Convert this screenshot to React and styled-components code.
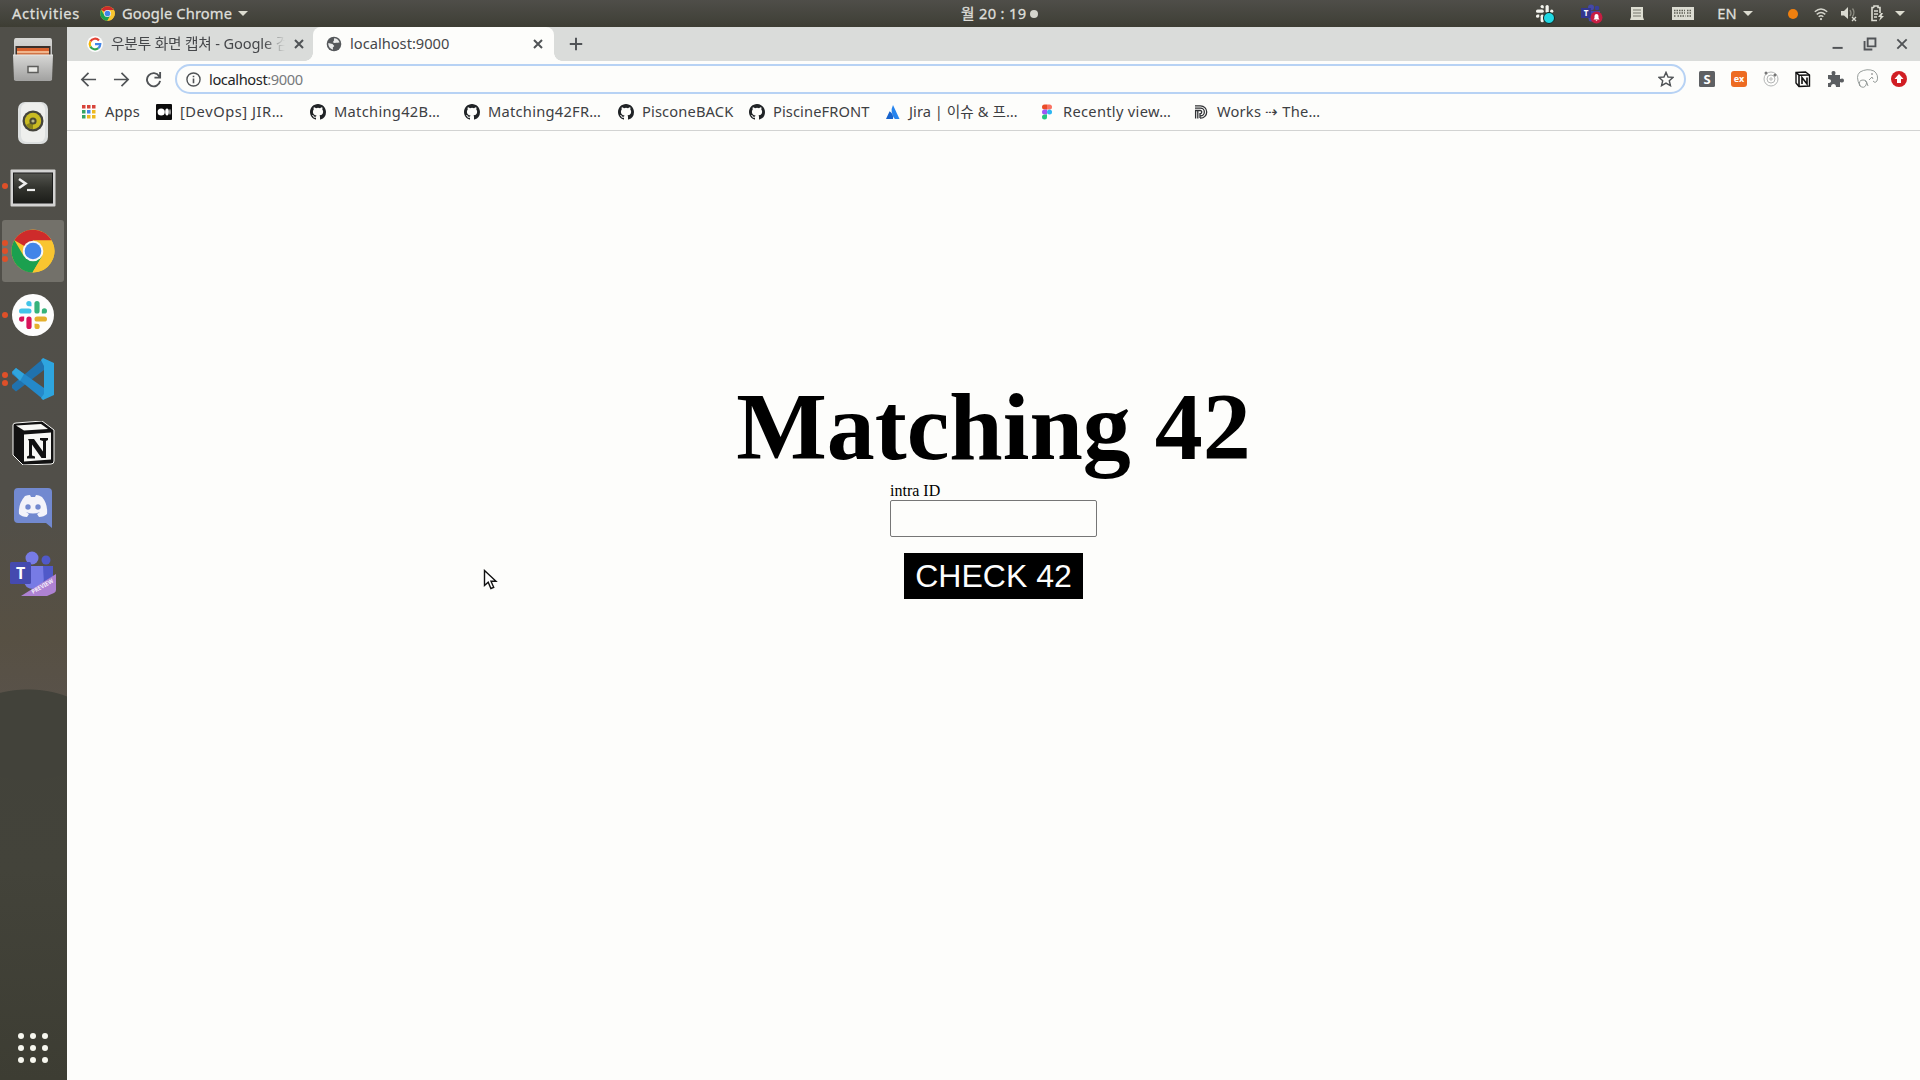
import React from "react";
import styled, { createGlobalStyle, css } from "styled-components";

const UI = `"Noto Sans", "Noto Sans CJK KR", sans-serif`;

const Global = createGlobalStyle`
  *, *::before, *::after { box-sizing: border-box; }
  html, body { margin: 0; height: 100%; overflow: hidden; }
  #root { height: 100%; }
`;

const Desktop = styled.div`
  display: flex;
  flex-direction: column;
  width: 1920px;
  height: 1080px;
  overflow: hidden;
  background: #45453c;
  font-family: ${UI};
`;

/* ---------- system bar ---------- */
const TopBar = styled.header`
  display: grid;
  grid-template-columns: 961px auto 1fr;
  height: 27px;
  flex: none;
  align-items: center;
  background: linear-gradient(#4f4e49, #42423a 75%, #3d3d33);
  color: #dfdfda;
  font-size: 14.67px;
  -webkit-text-stroke: 0.3px #dfdfda;
  line-height: 27px;
`;

const BarLeft = styled.div`
  display: flex;
  align-items: center;
  padding-left: 12px;
`;

const BarText = styled.span`
  letter-spacing: ${(p) => p.$ls || 0}px;
  width: ${(p) => (p.$w ? `${p.$w}px` : "auto")};
  margin-left: ${(p) => p.$left || 0}px;
  margin-right: ${(p) => p.$gap || 0}px;
  white-space: nowrap;
`;

const Caret = styled.i`
  width: 0;
  height: 0;
  border: 5px solid transparent;
  border-top: 5.5px solid #dcdcd0;
  border-bottom: 0;
`;

const Clock = styled.div`
  display: flex;
  align-items: center;
  gap: 3px;
  letter-spacing: 0.35px;
`;

const Dot = styled.i`
  width: ${(p) => p.$size}px;
  height: ${(p) => p.$size}px;
  border-radius: 50%;
  background: ${(p) => p.$color};
`;

const Tray = styled.div`
  display: flex;
  justify-content: flex-end;
  align-items: center;
  padding-right: 6px;
`;

const TrayItem = styled.div`
  display: flex;
  align-items: center;
  justify-content: center;
  gap: 6px;
  width: ${(p) => p.$w}px;
  height: 27px;
`;

/* ---------- dock ---------- */
const Body = styled.div`
  display: flex;
  flex: 1;
  min-height: 0;
`;

const Dock = styled.nav`
  display: flex;
  flex-direction: column;
  width: 67px;
  flex: none;
  padding-bottom: 10px;
  background:
    radial-gradient(ellipse 74px 46px at 28px 708px, #42423a 98%, transparent 100%) no-repeat,
    linear-gradient(#504f49 0, #514f49 45%, #575043 58%, #59524a 678px, #42423a 678px, #43433a 80%, #3d3d33 100%);
`;

const DockItem = styled.div`
  display: grid;
  grid-template-columns: 9px 46px;
  align-items: center;
  width: 62px;
  height: 62px;
  margin: 0 0 2.2px 2px;
  border-radius: 3px;
  background: ${(p) => (p.$active ? "#73716a" : "transparent")};
`;

const Markers = styled.div`
  display: flex;
  flex-direction: column;
  gap: 2px;
`;

const AppGrid = styled.div`
  display: grid;
  grid-template-columns: repeat(3, 6px);
  gap: 6px;
  margin: auto 0 7px 18px;
`;

/* ---------- browser ---------- */
const Browser = styled.section`
  display: flex;
  flex-direction: column;
  flex: 1;
  min-width: 0;
  background: #fdfdfb;
`;

const TabStrip = styled.div`
  display: flex;
  height: 34px;
  flex: none;
  background: #dadcda;
  color: #45474a;
  font-size: 14.67px;
`;

const Tab = styled.div`
  display: flex;
  align-items: center;
  gap: 8px;
  width: ${(p) => p.$w}px;
  height: 34px;
  padding: 0 ${(p) => p.$end}px 0 ${(p) => p.$pad}px;
  ${(p) =>
    p.$active &&
    css`
      position: relative;
      background: #fdfdfb;
      border-radius: 8px 8px 0 0;
      &::before, &::after {
        content: "";
        position: absolute;
        bottom: 0;
        width: 8px;
        height: 8px;
      }
      &::before {
        left: -8px;
        background: radial-gradient(circle at 0 0, transparent 7.5px, #fdfdfb 8px);
      }
      &::after {
        right: -8px;
        background: radial-gradient(circle at 100% 0, transparent 7.5px, #fdfdfb 8px);
      }
    `}
`;

const TabTitle = styled.span`
  flex: 1;
  overflow: hidden;
  white-space: nowrap;
  line-height: 30px;
  padding-bottom: 2px;
  letter-spacing: ${(p) => p.$ls}px;
  ${(p) => p.$fade && css`mask-image: linear-gradient(90deg, #000 88%, transparent);`}
`;

const NewTab = styled.div`
  display: flex;
  align-items: center;
  margin-left: 14px;
`;

const WindowButtons = styled.div`
  display: flex;
  align-items: center;
  gap: 18px;
  margin-left: auto;
  padding-right: 11px;
`;

const Toolbar = styled.div`
  display: flex;
  align-items: center;
  height: 36px;
  flex: none;
  padding: 0 0 0 13px;
`;

const NavButtons = styled.div`
  display: flex;
  gap: 15.5px;
  width: 95px;
  flex: none;
`;

const Omnibox = styled.div`
  display: flex;
  align-items: center;
  width: 1511px;
  flex: none;
  height: 30px;
  padding: 0 10px 0 9px;
  border: 2px solid #b7d2f4;
  border-radius: 15px;
  color: #777a7c;
  font-size: 14.67px;
`;

const Address = styled.span`
  flex: 1;
  margin-left: 8px;
  line-height: 24px;
  padding-bottom: 1px;
  letter-spacing: -0.4px;
  b { font-weight: 400; color: #222426; }
`;

const Extensions = styled.div`
  display: flex;
  flex: none;
  gap: 8px;
  margin-left: 9px;
`;

const Bookmarks = styled.div`
  display: flex;
  align-items: center;
  height: 34px;
  flex: none;
  padding: 0 0 3px 14px;
  border-bottom: 1px solid #d2d3d2;
  color: #3d4043;
  font-size: 14.67px;
`;

const Bookmark = styled.div`
  display: flex;
  align-items: center;
  gap: 8px;
  width: ${(p) => p.$w}px;
  flex: none;
  white-space: nowrap;
  letter-spacing: ${(p) => p.$ls}px;
  line-height: 28px;
  svg { flex: none; }
`;

const BookmarkLabel = styled.span`
  padding-bottom: 2px;
`;

const Page = styled.main`
  display: flex;
  flex-direction: column;
  align-items: center;
  flex: 1;
  padding-top: 241px;
  color: #000;
  font-family: "Liberation Serif", serif;
`;

const Title = styled.h1`
  margin: 0;
  font-size: 96px;
  line-height: 110px;
  font-weight: 700;
`;

const Field = styled.label`
  display: flex;
  flex-direction: column;
  width: 207px;
  font-size: 16px;
  line-height: 18px;
`;

const Input = styled.input`
  width: 207px;
  height: 37px;
  border: 1px solid #767676;
  border-radius: 2px;
  background: #fdfdfb;
  font-size: 16px;
`;

const CheckButton = styled.button`
  width: 179px;
  height: 46px;
  margin-top: 16px;
  padding: 0;
  border: 0;
  background: #000;
  color: #fdfdfd;
  font: 32px/46px "Liberation Sans", sans-serif;
`;

const Pointer = styled.svg`
  position: absolute;
  left: 483px;
  top: 569px;
`;

/* ---------- drawings ---------- */
const Chrome = ({ size }) => (
  <svg width={size} height={size} viewBox="0 0 44 44">
    <circle cx="22" cy="22" r="21.5" fill="#f9c530" />
    <path d="M22 22L3.4 11.2A21.5 21.5 0 0 1 40.6 11.5H22z" fill="#ce2b2b" />
    <path d="M3.4 11.2A21.5 21.5 0 0 0 21.5 43.5L31 27.5 22 22 13 27.5z" fill="#1ba04f" />
    <path d="M22 11.5H40.6A21.5 21.5 0 0 1 21.5 43.5L31 27.5z" fill="#f9c530" />
    <circle cx="22" cy="22" r="10.3" fill="#f7f7f7" />
    <circle cx="22" cy="22" r="8.3" fill="#4285e8" />
  </svg>
);

const SlackMark = ({ mono }) => {
  const c = mono ? Array(4).fill("#f4f4ee") : ["#41c3e8", "#36b37a", "#e5b02d", "#d8135a"];
  return [0, 1, 2, 3].map((i) => (
    <g key={i} fill={c[i]} transform={`rotate(${i * 90} 14 14)`}>
      <rect x="0" y="7.4" width="12.5" height="5.2" rx="2.6" />
      <path d="M12.5 5.2h-2.6a2.6 2.6 0 1 1 2.6-2.6z" />
    </g>
  ));
};

const Files = () => (
  <svg width="42" height="46" viewBox="0 0 42 46">
    <defs><linearGradient id="cab" x2="0" y2="1"><stop stopColor="#d7d7d5" /><stop offset="1" stopColor="#a3a3a2" /></linearGradient></defs>
    <path d="M4 2h34q2 0 2 3v38q0 2-2 2H4q-2 0-2-2V5q0-3 2-3z" fill="url(#cab)" />
    <path d="M3.500 10h35v10h-35z" fill="#3b302b" />
    <path d="M5 12h32v8H5z" fill="#d9622e" /><path d="M5 15h32v2H5z" fill="#f0b58c" /><path d="M5 17h32v3H5z" fill="#cf7447" />
    <path d="M1 19h40l-1 25H2z" fill="url(#cab)" /><path d="M1 19h40" stroke="#e8e8e5" />
    <rect x="16" y="30.500" width="10" height="6" fill="#e9e9e6" stroke="#5d5d5b" strokeWidth="1.500" />
  </svg>
);
const Speaker = () => (
  <svg width="42" height="46" viewBox="0 0 42 46">
    <rect x="6" y="2" width="30" height="42" rx="7" fill="#dcdfdf" /><rect x="9" y="3" width="24" height="39" rx="6" fill="#eeefed" />
    <circle cx="21" cy="21" r="10.500" fill="#44443c" /><circle cx="21" cy="21" r="8.200" fill="#c9bb22" /><path d="M21 21l-7 4a8 8 0 0 0 7 4z" fill="#8b841a" />
    <circle cx="21" cy="21" r="3.600" fill="#4b4a31" /><circle cx="21" cy="21" r="1.600" fill="#b9b78a" />
  </svg>
);
const Terminal = () => (
  <svg width="46" height="38" viewBox="0 0 46 38">
    <defs><linearGradient id="scr" x2="0" y2="1"><stop stopColor="#555650" /><stop offset=".5" stopColor="#32332e" /><stop offset="1" stopColor="#1c1d19" /></linearGradient></defs>
    <rect x=".5" y=".5" width="45" height="37" rx="1" fill="#d3d3d2" /><rect x="3.500" y="4" width="39" height="30" fill="url(#scr)" stroke="#1c1d1c" />
    <path d="M9 10l6.500 4.500L9 19" fill="none" stroke="#eee" strokeWidth="2.600" /><path d="M17 21h8" stroke="#eee" strokeWidth="2.200" />
  </svg>
);
const Slack = () => (
  <svg width="42" height="42" viewBox="0 0 42 42"><circle cx="21" cy="21" r="21" fill="#fdfdfd" /><g transform="translate(7 7)"><SlackMark /></g></svg>
);
const Code = () => (
  <svg width="42" height="42" viewBox="0 0 42 42">
    <path d="M0 30l4 3.500L32 12V0L0 27z" fill="#2072ae" /><path d="M0 14l4-4 28 20v12L0 16z" fill="#2489ca" />
    <path d="M0 14l4-4 8 6-4 7z" fill="#31a5dc" /><path d="M31 0l11 5v32l-11 5-2-2 3-4V8l-3-6z" fill="#2ea5df" />
  </svg>
);
const Notion = ({ size = 44 }) => (
  <svg width={size} height={size} viewBox="0 0 44 44">
    <path d="M2 4Q2 2 5 2L31 0l12 9v31q0 3-3 3L12 44 2 34z" fill="#111" stroke="#f8f8f5" strokeWidth="1" />
    <path d="M5 4.500L30 3l7 5L13 9.500z" fill="#f8f8f5" />
    <path d="M13 13.500L40 11.500v27l-27 2z" fill="#f8f8f5" />
    <path d="M17 18h6l9 12.500V20l-3-1v-2h8v2l-2 1v17h-4.500L21 23.500v11l3 1v2h-8v-2l2-1V20z" fill="#111" />
  </svg>
);
const Discord = () => (
  <svg width="42" height="42" viewBox="0 0 42 42">
    <path d="M6 1h30q4 0 4 4v36l-6-5H6q-4 0-4-4V5q0-4 4-4z" fill="#7289d0" />
    <path d="M13 9q3-1 5-1l1 2h4l1-2q3 0 6 2 6 7 5 17-3 3-8 3l-2-3 3-2q-7 3-14 0l3 2-2 3q-5 0-8-3-1-10 6-18z" fill="#f3f3fa" />
    <circle cx="16" cy="20" r="2.700" fill="#7289d0" /><circle cx="26" cy="20" r="2.700" fill="#7289d0" />
  </svg>
);
const BannerText = styled.text`
  font: 700 6px ${UI};
  fill: #f4f1fd;
`;
const TileText = styled.text`
  font: 700 ${(p) => p.$size}px ${UI};
  fill: ${(p) => p.$fill || "#fff"};
  text-anchor: middle;
  -webkit-text-stroke: 0;
`;
const TeamsSvg = styled.svg`
  overflow: visible;
`;
const Teams = () => (
  <TeamsSvg width="46" height="46" viewBox="0 0 46 46">
    <circle cx="22" cy="7" r="6.500" fill="#777be5" /><circle cx="36" cy="9" r="4.500" fill="#5059c9" />
    <path d="M14 15h20v14q0 9-10 9t-10-9z" fill="#777be5" /><path d="M33 15h10v15q-3 5-9 3z" fill="#5059c9" />
    <rect y="11" width="21" height="22" rx="1.500" fill="#454aaf" /><TileText $size={16} x="10.500" y="28">T</TileText>
    <path d="M11 45L46 23v16q0 2-2 3l-7 3z" fill="#ae82d3" /><BannerText transform="translate(23 43) rotate(-30)" textLength="24" lengthAdjust="spacingAndGlyphs">PREVIEW</BannerText>
  </TeamsSvg>
);

const CenterIcon = styled.div`
  display: flex;
  justify-content: center;
  width: 43px;
  padding-top: ${(p) => p.$down || 0}px;
  svg { flex: none; }
`;

const AppIcon = ({ active, children, dots = 0, down }) => (
  <DockItem $active={active}>
    <Markers>{Array.from({ length: dots }, (_, i) => <Dot key={i} $size={6} $color="#de5029" />)}</Markers>
    <CenterIcon $down={down}>{children}</CenterIcon>
  </DockItem>
);

const dock = [
  [0, <Files />, 1], [0, <Speaker />, 1], [1, <Terminal />, 4], [3, <Chrome size={44} />, 0], [1, <Slack />, 0],
  [2, <Code />, 0], [0, <Notion />, 0], [0, <Discord />, 2], [0, <Teams />, 4],
];

const Line = ({ d, size = 18, w = 1.8, color = "#505356" }) => (
  <svg width={size} height={size} viewBox="0 0 18 18" fill="none" stroke={color} strokeWidth={w}><path d={d} /></svg>
);
const GoogleG = () => (
  <svg width="16" height="16" viewBox="0 0 16 16"><circle cx="8" cy="8" r="8" fill="#fdfdfd" /><g fill="none" strokeWidth="2.200">
    <path d="M12 4.500A5.300 5.300 0 0 0 3.400 5.400" stroke="#e34133" /><path d="M3.400 5.400a5.300 5.300 0 0 0 0 5.200" stroke="#f4b400" />
    <path d="M3.400 10.600a5.300 5.300 0 0 0 8 1.500" stroke="#31a352" /><path d="M11.400 12.100A5.300 5.300 0 0 0 13.300 8.100H8" stroke="#4285e8" /></g></svg>
);
const Globe = () => (
  <svg width="16" height="16" viewBox="0 0 16 16"><circle cx="8" cy="8" r="7.300" fill="#55585b" />
    <path d="M8 2.200c3 0 5 2 5.600 4.300-1.500-.5-2 .8-3.300.2L8.500 7 6.700 6.200l1.200-1.500z" fill="#e9eaea" /><path d="M2.300 7l4.200 1 1.800 2-1.500 1.500.3 2.200A5.900 5.900 0 0 1 2.300 7z" fill="#e9eaea" /></svg>
);
const AppsIcon = () => (
  <svg width="16" height="16" viewBox="0 0 16 16">{["#d84339", "#d84339", "#d84339", "#36a564", "#4285e8", "#edb91f", "#36a564", "#edb91f", "#edb91f"].map((c, i) => <rect key={i} x={1 + (i % 3) * 5} y={1 + Math.floor(i / 3) * 5} width="3.500" height="3.500" fill={c} />)}</svg>
);
const Medium = () => (
  <svg width="16" height="16" viewBox="0 0 16 16"><rect width="16" height="16" rx="1" fill="#0b0b0b" /><circle cx="5.200" cy="8" r="3.600" fill="#fff" /><ellipse cx="11" cy="8" rx="1.800" ry="3.400" fill="#fff" /><ellipse cx="14" cy="8" rx=".6" ry="3" fill="#fff" /></svg>
);
const GitHub = () => (
  <svg width="16" height="16" viewBox="0 0 16 16"><path fill="#202326" d="M8 0C3.580 0 0 3.580 0 8c0 3.540 2.290 6.530 5.470 7.590.4.070.55-.17.55-.38 0-.19-.01-.82-.01-1.490-2.010.37-2.530-.49-2.690-.94-.09-.23-.48-.94-.82-1.130-.28-.15-.68-.52-.01-.53.63-.01 1.080.58 1.230.82.72 1.210 1.870.87 2.330.66.07-.52.28-.87.51-1.070-1.780-.2-3.640-.89-3.640-3.950 0-.87.31-1.590.82-2.150-.08-.2-.36-1.020.08-2.120 0 0 .67-.21 2.200.82a7.600 7.600 0 0 1 4 0c1.530-1.040 2.200-.82 2.200-.82.44 1.100.16 1.920.08 2.120.51.56.82 1.270.82 2.150 0 3.070-1.870 3.750-3.650 3.950.29.25.54.73.54 1.480 0 1.070-.01 1.930-.01 2.200 0 .21.15.46.55.38A8 8 0 0 0 16 8c0-4.420-3.580-8-8-8z" /></svg>
);
const Jira = () => (
  <svg width="16" height="16" viewBox="0 0 16 16"><path d="M8 1l6.500 14H9.800Q4.500 8 8 1z" fill="#2684ee" /><path d="M4.600 7.300Q8.800 10 8 15H1z" fill="#1763cc" /></svg>
);
const Figma = () => (
  <svg width="16" height="16" viewBox="0 0 16 16"><path d="M8 .5H5.500a2.500 2.500 0 0 0 0 5H8z" fill="#ea4c27" /><path d="M8 .5h2.500a2.500 2.500 0 0 1 0 5H8z" fill="#fb7262" /><path d="M8 5.500H5.500a2.500 2.500 0 0 0 0 5H8z" fill="#9d57f4" /><circle cx="10.500" cy="8" r="2.500" fill="#2cb6f2" /><path d="M8 10.500H5.500a2.500 2.500 0 1 0 2.500 2.500z" fill="#22c780" /></svg>
);
const DIcon = () => (
  <svg width="16" height="16" viewBox="0 0 16 16" fill="none" stroke="#303235" strokeWidth="1.300"><path d="M2 1.800h5.500a6 6 0 0 1 0 12.400H7M2 4.200h5.500a3.800 3.800 0 0 1 0 7.700H7M2 6.500h5.200a1.500 1.500 0 0 1 0 3.100H7V14M4.800 6.500V14.500M2.600 6.500V14.500" /></svg>
);

const bookmarks = [
  ["Apps", <AppsIcon />, 75, 0.1],
  ["[DevOps] JIR…", <Medium />, 154, 0.55],
  ["Matching42B…", <GitHub />, 154, 0.3],
  ["Matching42FR…", <GitHub />, 154, 0.25],
  ["PisconeBACK", <GitHub />, 131, 0.15],
  ["PiscineFRONT", <GitHub />, 136, 0.1],
  ["Jira | 이슈 & 프…", <Jira />, 154, 0.05],
  ["Recently view…", <Figma />, 154, 0.3],
  ["Works ⇢ The…", <DIcon />, 150, 0.2],
];

const Ext = ({ children }) => <svg width="24" height="24" viewBox="0 0 24 24">{children}</svg>;

export default function App() {
  return (
    <Desktop>
      <Global />
      <TopBar>
        <BarLeft>
          <BarText $w={68} $gap={20} $ls={0.7}>Activities</BarText>
          <Chrome size={15} />
          <BarText $w={111} $left={7} $gap={5} $ls={0.15}>Google Chrome</BarText>
          <Caret />
        </BarLeft>
        <Clock>월 20 : 19<Dot $size={8} $color="#d5d5cd" /></Clock>
        <Tray>
          <TrayItem $w={70}>
            <svg width="20" height="20" viewBox="0 0 20 20"><g transform="translate(1 1) scale(.62)"><SlackMark mono /></g><circle cx="14" cy="14" r="5.500" fill="#20d8e3" stroke="#17251f" /></svg>
          </TrayItem>
          <TrayItem $w={24}>
            <svg width="22" height="20" viewBox="0 0 22 20"><circle cx="10" cy="3.500" r="3" fill="#4448a8" /><circle cx="16" cy="4" r="2.300" fill="#383f99" /><path d="M6 7h13v6q-4 6-11 4z" fill="#4448a8" /><rect y="4" width="10" height="10" fill="#33378f" /><TileText $size={8} x="5" y="12">T</TileText><circle cx="15.500" cy="13.500" r="6" fill="#c71d42" /><path d="M12.500 15.500l1-1.500v-2a2 2 0 0 1 4 0v2l1 1.500zM14.500 16.300h2l-1 1z" fill="#fff" /></svg>
          </TrayItem>
          <TrayItem $w={66}><svg width="16" height="15" viewBox="0 0 16 15"><path d="M2 1h12v10l1 3H1l1-3z" fill="#deded2" /><path d="M4 4h8M4 7h8M4 10h8" stroke="#77776d" /></svg></TrayItem>
          <TrayItem $w={26}><svg width="22" height="13" viewBox="0 0 22 13"><rect width="22" height="13" fill="#dcdcd2" /><path d="M2 3.500h11M2 6h11M15 3.500h5M15 6h5M2 9h2M5.500 9h8M15 9h5" stroke="#5d5d53" strokeWidth="1.500" strokeDasharray="1.500 1" /></svg></TrayItem>
          <TrayItem $w={76}><BarText $left={2}>EN</BarText><Caret /></TrayItem>
          <TrayItem $w={42}><Dot $size={10} $color="#f0800f" /></TrayItem>
          <TrayItem $w={14}><svg width="14" height="14" viewBox="0 0 18 18" fill="none" stroke="#d5d5cc" strokeWidth="1.800"><path d="M1 6q8-7 16 0M3.500 9.500q5.500-5 11 0M6 12.500q3-2.500 6 0" /><circle cx="9" cy="15.500" r="1.500" fill="#d5d5cc" stroke="none" /></svg></TrayItem>
          <TrayItem $w={42}><svg width="18" height="16" viewBox="0 0 18 16"><path d="M1 5h3l4-4v12L4 9.500H1z" fill="#d9d9d0" /><path d="M10 4q2 3 0 6M12.500 2.500q3 4 0 8" stroke="#8b8b80" fill="none" strokeWidth="1.300" /><path d="M12 11l4 4m0-4l-4 4" stroke="#d9d9d0" strokeWidth="1.300" /></svg></TrayItem>
          <TrayItem $w={15}><svg width="15" height="17" viewBox="0 0 15 17"><path d="M4 2.500V1h4v1.500h2V8M7 15.500H2v-13h2M4 6h4M4 9h4M4 12h3" stroke="#dcdcd2" strokeWidth="1.600" fill="none" /><path d="M11 8l-3 4h2.500L9 16l5-5h-2.500l1.500-3z" fill="#dcdcd2" /></svg></TrayItem>
          <TrayItem $w={29}><Caret /></TrayItem>
        </Tray>
      </TopBar>
      <Body>
        <Dock>
          {dock.map(([dots, icon, down], i) => (
            <AppIcon key={i} dots={dots} down={down} active={i === 3}>{icon}</AppIcon>
          ))}
          <AppGrid>{Array.from({ length: 9 }, (_, i) => <Dot key={i} $size={6} $color="#f7f7ef" />)}</AppGrid>
        </Dock>
        <Browser>
          <TabStrip>
            <Tab $w={246} $pad={20} $end={8}>
              <GoogleG />
              <TabTitle $fade $ls={-0.15}>우분투 화면 캡쳐 - Google 검</TabTitle>
              <Line size={12} w={3} d="M3 3l12 12M15 3L3 15" />
            </Tab>
            <Tab $w={241} $pad={13} $end={10} $active>
              <Globe />
              <TabTitle $ls={0}>localhost:9000</TabTitle>
              <Line size={12} w={3} d="M3 3l12 12M15 3L3 15" />
            </Tab>
            <NewTab><Line size={16} w={2.2} d="M9 2v14M2 9h14" /></NewTab>
            <WindowButtons>
              <Line size={14} w={2.5} d="M2 14h13" />
              <Line size={14} w={2.4} d="M6 2h10v10H6zM2 5v11h10" />
              <Line size={14} w={2.4} d="M3 3l12 12M15 3L3 15" />
            </WindowButtons>
          </TabStrip>
          <Toolbar>
            <NavButtons>
              <Line size={17} d="M17 9H2.500M9 2L2 9l7 7" />
              <Line size={17} d="M1 9h14.500M9 2l7 7-7 7" />
              <Line size={17} w={2} d="M15 5.500A7 7 0 1 0 16 10.500M16 1v6h-6" />
            </NavButtons>
            <Omnibox>
              <svg width="15" height="15" viewBox="0 0 16 16" fill="none" stroke="#505356" strokeWidth="1.500"><circle cx="8" cy="8" r="7" /><path d="M8 7v5M8 4v1.600" strokeWidth="1.700" /></svg>
              <Address><b>localhost</b>:9000</Address>
              <Line size={16} w={1.6} d="M9 1.500l2.300 5.200 5.700.5-4.300 3.800 1.300 5.500L9 13.600 4 16.500l1.300-5.500L1 7.200l5.700-.5z" />
            </Omnibox>
            <Extensions>
              <Ext><rect x="4" y="4" width="16" height="16" rx="1.500" fill="#5e6063" /><TileText $size={13} x="12" y="16.700">S</TileText></Ext>
              <Ext><rect x="4" y="4" width="16" height="16" rx="3" fill="#ed6b22" /><TileText $size={9} x="12" y="15">ex</TileText></Ext>
              <Ext><g fill="none" stroke="#b4b6b6"><circle cx="12" cy="12" r="7" /><circle cx="12" cy="12" r="4" /><circle cx="12" cy="12" r="1.200" /></g><circle cx="7" cy="6" r="1.500" fill="#777" /><circle cx="16" cy="8" r="1.500" fill="#777" /></Ext>
              <Ext><path d="M5 5.500L14.500 5 18.500 8v11l-10.500.5L5 16z" fill="#fdfdfb" stroke="#111" strokeWidth="1.400" /><path d="M5 5.500L8 8.200v11M8 8.200L18.500 8" fill="none" stroke="#111" strokeWidth="1.600" /><path d="M11 17v-6.500l5 6.500v-6.500" fill="none" stroke="#111" strokeWidth="1.600" /></Ext>
              <Ext><path d="M5 8h4q-1.500-4 1.500-4T12 8h5v4q4-1.500 4 1.500T17 15v5h-4q0-3-2.500-3T8 20H5v-4q3 0 3-2t-3-2z" fill="#5b5e61" /></Ext>
              <Ext><path d="M5 19Q0 9 5 5q7-4 14-1 5 4 3 10-2 3-4 0M5 19q-2-6 3-6 5 0 3 5-2 4-6 1M10 14q2 0 3 5M14 13l3-3 1 2" fill="none" stroke="#8b9290" strokeWidth=".9" /><circle cx="17" cy="7" r=".8" fill="#666" /></Ext>
              <Ext><circle cx="12" cy="12" r="8" fill="#d11e23" /><path d="M12 7l4.500 5H14v4h-4v-4H7.500z" fill="#fff" /></Ext>
            </Extensions>
          </Toolbar>
          <Bookmarks>
            {bookmarks.map(([label, icon, w, ls]) => (
              <Bookmark key={label} $w={w} $ls={ls}>{icon}<BookmarkLabel>{label}</BookmarkLabel></Bookmark>
            ))}
          </Bookmarks>
          <Page>
            <Title>Matching 42</Title>
            <Field>intra ID<Input /></Field>
            <CheckButton>CHECK 42</CheckButton>
          </Page>
        </Browser>
      </Body>
      <Pointer width="15" height="22" viewBox="0 0 15 22"><path d="M1.500 1.500v15l3.700-3.300 2.700 6.300 2.800-1.200-2.700-6.100h5z" fill="#fff" stroke="#111" strokeWidth="1.400" /></Pointer>
    </Desktop>
  );
}
